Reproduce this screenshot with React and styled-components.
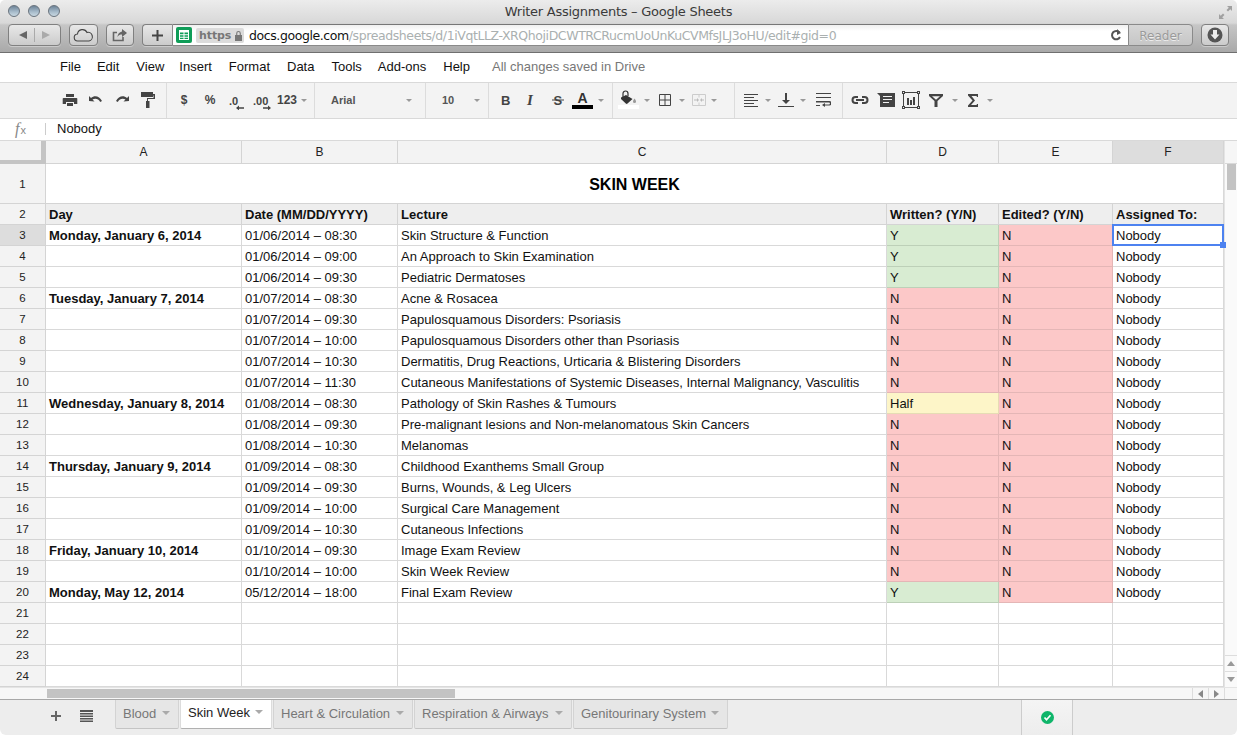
import React from "react";
import styled, { createGlobalStyle } from "styled-components";

const Global = createGlobalStyle`
  html, body { margin: 0; padding: 0; background: #fff; overflow: hidden; }
  * { box-sizing: border-box; }
`;

const Win = styled.div`
  width: 1237px; height: 735px; display: flex; flex-direction: column; overflow: hidden;
  font-family: "Liberation Sans", Arial, sans-serif; color: #000; background: #fff;
  border-radius: 5px 5px 6px 6px;
`;

/* Browser chrome */
const Chrome = styled.div`
  height: 53px; flex: none; display: flex; flex-direction: column;
  background: linear-gradient(#ececec, #d8d8d8 23px, #c6c6c6 25px, #a9a9a9 52px);
  border-bottom: 1px solid #6f6f6f;
`;
const TitleBar = styled.div`
  height: 24px; display: flex; align-items: center; justify-content: space-between; padding: 0 4px 0 8px;
  position: relative;
`;
const Lights = styled.div`display: flex; gap: 8px; margin-bottom: 2px;`;
const Light = styled.span`
  width: 12px; height: 12px; border-radius: 50%;
  background: linear-gradient(#6d8498, #a9bdcc 60%, #c9d8e2);
  border: 1px solid #69737d;
`;
const Title = styled.div`
  position: absolute; left: 0; right: 0; top: 4px; text-align: center;
  font: 13px "DejaVu Sans", sans-serif; letter-spacing: -0.26px; color: #3a3a3a;
`;
const BrowserBar = styled.div`
  height: 22px; display: flex; align-items: stretch; padding: 0 8px;
`;
const ChromeBtn = styled.div`
  width: ${p => p.$w}px; margin-right: ${p => p.$mr || 0}px;
  display: flex; align-items: center; justify-content: center; flex: none;
  border: 1px solid #808080; border-radius: 4px;
  background: linear-gradient(#e8e8e8, #cbcbcb);
  box-shadow: 0 1px 0 rgba(255,255,255,.35);
`;
const NavSplit = styled.span`width: 1px; height: 14px; background: #aaa; margin: 0 6px;`;
const UrlField = styled.div`
  flex: 1; display: flex; align-items: center; background: linear-gradient(#f0f0f0, #fff 6px);
  border-top: 1px solid #777; border-bottom: 1px solid #8a8a8a; padding-left: 3px; min-width: 0;
`;
const PlusBtn = styled(ChromeBtn)`border-radius: 4px 0 0 4px; border-right: 1px solid #8a8a8a;`;
const SheetBadge = styled.div`
  width: 16px; height: 16px; background: #0f9d58; border-radius: 2px;
  display: flex; align-items: center; justify-content: center;
`;
const Https = styled.div`
  margin-left: 4px; width: 48px; height: 15px; background: #dcdcdc; border-radius: 2px;
  display: flex; align-items: center; gap: 3px; padding-left: 3px;
  font: bold 11px "DejaVu Sans", sans-serif; color: #777; letter-spacing: -0.1px;
`;
const Url = styled.div`
  margin-left: 5px; font: 12.5px "DejaVu Sans", sans-serif; color: #aab0b0; flex: 1; white-space: nowrap;
  letter-spacing: -0.41px;
  span { color: #111; }
`;
const Reload = styled.div`width: 22px; display: flex; justify-content: center; margin-right: 1px;`;
const ReaderBtn = styled.div`
  width: 65px; margin-right: 8px; border: 1px solid #8a8a8a; border-radius: 0 4px 4px 0; flex: none;
  background: linear-gradient(#d6d6d6, #c6c6c6); padding-top: 1px;
  display: flex; align-items: center; justify-content: center;
  font: 12px "DejaVu Sans", sans-serif; color: #9a9a9a; text-shadow: 0 1px 0 #eee;
`;

/* Menu */
const Menu = styled.div`
  height: 30px; flex: none; display: flex; align-items: center; padding: 0 0 3px 60px; font-size: 13px; color: #111;
  border-bottom: 1px solid #d9d9d9; background: #fff;
`;
const MenuItem = styled.span`margin-right: ${p => p.$mr}px;`;
const Saved = styled.span`color: #777; margin-left: 22px;`;

/* Toolbar */
const Toolbar = styled.div`
  height: 36px; flex: none; display: flex; background: #f3f3f3; border-bottom: 1px solid #d9d9d9;
`;
const ToolGroup = styled.div`
  width: ${p => p.$w}px; padding-left: ${p => p.$pl || 0}px; flex: none; display: flex; align-items: center;
  border-right: 1px solid #dcdcdc; padding-bottom: 1px;
`;
const ToolLast = styled(ToolGroup)`border-right: none; flex: 1;`;
const Tool = styled.div`
  width: ${p => p.$w || 26}px; flex: none; height: 24px; display: flex; align-items: center; justify-content: center;
  font: bold 12px "Liberation Sans", sans-serif; color: #444;
`;
const Caret = styled.span`
  width: 0; height: 0; flex: none; border-left: 3.5px solid transparent; border-right: 3.5px solid transparent;
  border-top: 3.5px solid #999; margin-left: ${p => p.$ml || 0}px; margin-right: ${p => p.$mr || 0}px;
`;
const FontName = styled.span`font: bold 11px "Liberation Sans", sans-serif; color: #555; width: ${p => p.$w}px; margin-left: ${p => p.$ml}px;`;

/* Formula */
const Formula = styled.div`
  height: 22px; flex: none; display: flex; align-items: center; background: #fff; border-bottom: 1px solid #d9d9d9;
  font-size: 13px; padding-bottom: 2px;
`;
const Fx = styled.span`
  width: 46px; padding-left: 15px; font: italic 16px "Liberation Serif", serif; color: #888; position: relative; line-height: 16px;
  &::after { content: ""; position: absolute; right: 0; top: 2px; height: 12px; width: 1px; background: #ccc; }
  small { font: 11px "Liberation Sans", sans-serif; margin-left: 1px; }
`;
const FormulaText = styled.span`margin-left: 11px; color: #111;`;

/* Sheet */
const SheetArea = styled.div`flex: 1; display: flex; min-height: 0; background: #fff; overflow: hidden;`;
const Grid = styled.div`
  width: 1224px; flex: none; display: grid; align-content: start;
  grid-template-columns: 46px 196px 156px 489px 112px 114px 111px;
  grid-template-rows: 23px 40px 21px;
  grid-auto-rows: 21px;
`;
const Corner = styled.div`
  background: #f3f3f3; border-right: 5px solid #c4c4c4; border-bottom: 4px solid #c4c4c4;
`;
const ColHead = styled.div`
  display: flex; align-items: center; justify-content: center; font-size: 12px; color: #222;
  background: ${p => p.$sel ? "#dddddd" : "#f3f3f3"};
  border-right: 1px solid #d4d4d4; border-bottom: 1px solid #d4d4d4;
`;
const RowHead = styled.div`
  display: flex; align-items: center; justify-content: center; font-size: 11.5px; color: #222;
  background: ${p => p.$sel ? "#dddddd" : "#f3f3f3"};
  border-right: 1px solid #d4d4d4; border-bottom: 1px solid #d4d4d4;
`;
const fills = { Y: "#d8ecd2", N: "#fcc8c8", H: "#fdf5c8" };
const edge = { Y: "#bdd0b8", N: "#e4b6b6", H: "#e6dcb4" };
const Cell = styled.div`
  display: flex; align-items: center; padding: 0 3px; font-size: 13px; color: #111; white-space: nowrap; overflow: hidden;
  font-weight: ${p => p.$bold ? 700 : 400};
  background: ${p => fills[p.$fill] || "#fff"};
  border-right: 1px solid ${p => edge[p.$fill] || "#d9d9d9"};
  border-bottom: 1px solid ${p => edge[p.$fill] || "#d9d9d9"};
`;
const HeadCell = styled(Cell)`
  background: #eeeeee; border-color: #d4d4d4; padding-top: 1px;
`;
const TitleCell = styled.div`
  grid-column: span 6; display: flex; align-items: center; justify-content: center;
  font-size: 16px; font-weight: 700; border-bottom: 1px solid #d4d4d4; border-right: 1px solid #d9d9d9; padding-top: 2px;
`;
const Active = styled(Cell)`
  position: relative; overflow: visible; border: 2px solid #4d82f0; padding: 0 2px; z-index: 2; height: 22px; margin: -1px 0 0 -1px; width: 112px;
`;
const Handle = styled.span`
  position: absolute; right: -4px; bottom: -4px; width: 6px; height: 6px; background: #4d82f0;
`;

/* Scrollbars */
const VScroll = styled.div`
  flex: 1; display: flex; flex-direction: column; background: #fafafa; border-left: 1px solid #e4e4e4;
`;
const VTop = styled.div`height: 23px; flex: none; background: #f6f6f6; border-bottom: 1px solid #d9d9d9;`;
const VThumb = styled.div`width: 9px; height: 26px; background: #c3c3c3; margin: 0 0 0 2px; flex: none;`;
const VSpacer = styled.div`flex: 1;`;
const ArrowBtn = styled.div`
  height: 16px; display: flex; align-items: center; justify-content: center; border-top: 1px solid #ddd; flex: none;
`;
const HScroll = styled.div`
  height: 13px; flex: none; display: flex; align-items: stretch; background: #f7f7f7; border-top: 1px solid #e4e4e4;
  border-bottom: 1px solid #a8a8a8;
`;
const HLead = styled.div`width: 47px; flex: none;`;
const HThumb = styled.div`width: 408px; background: #c3c3c3; flex: none; margin: 1px 0;`;
const HFill = styled.div`flex: 1;`;
const HBtn = styled.div`
  width: 16px; flex: none; border-left: 1px solid #ddd; display: flex; align-items: center; justify-content: center;
`;
const HEnd = styled.div`width: 13px; flex: none; border-left: 1px solid #ddd;`;

/* Tabs */
const TabBar = styled.div`
  height: 35px; flex: none; display: flex; align-items: stretch; background: #ededed; position: relative;
`;
const TabTools = styled.div`
  width: 115px; flex: none; display: flex; align-items: center; padding: 0 0 3px 50px; gap: 18px;
`;
const Tab = styled.div`
  width: ${p => p.$w}px; flex: none; height: 29px; display: flex; align-items: center; padding: 0 0 ${p => p.$on ? 3 : 1}px 7px;
  font-size: 13px; color: ${p => p.$on ? "#222" : "#777"};
  background: ${p => p.$on ? "#fff" : "#e6e6e6"};
  border: 1px solid ${p => p.$on ? "#dcdcdc" : "#d3d3d3"}; border-top: 0;
  border-bottom: ${p => p.$on ? "1px solid #b0b0b0" : "1px solid #c4c4c4"};
  border-radius: 0 0 2px 2px; margin-right: 1px;
  position: relative;
`;
const TabCaret = styled.span`
  position: absolute; right: 8px; top: ${p => p.$on ? 10 : 11}px; width: 0; height: 0;
  border-left: 4px solid transparent; border-right: 4px solid transparent; border-top: 4px solid #aaa;
`;
const StatusSpacer = styled.div`width: 292px; flex: none;`;
const Status = styled.div`
  width: 52px; flex: none; display: flex; align-items: center; justify-content: center;
  border-left: 1px solid #ccc; border-right: 1px solid #ccc;
  background: linear-gradient(#f4f4f4, #ededed);
`;

const Svg = ({ w = 16, h = 16, vb, children }) => (
  <svg width={w} height={h} viewBox={vb || `0 0 ${w} ${h}`} style={{ display: "block", flex: "none" }}>{children}</svg>
);

const icons = {
  print: <Svg><path fill="#444" d="M4 2h8v3H4zM1.500 6h13a.8.8 0 0 1 .8.8V12H12v-2H4v2H.7V6.800A.8.8 0 0 1 1.500 6zM5 11h6v3H5z" /></Svg>,
  undo: <Svg><path fill="#444" d="M1 9V4l2 2c3.500-3 8.500-2 11 3l-1.800.9C10.500 6.500 7 6 4.500 7.500L6.500 9.400z" /></Svg>,
  redo: <Svg><path fill="#444" d="M15 9V4l-2 2C9.500 3 4.500 4 2 9l1.800.9C5.500 6.500 9 6 11.500 7.500L9.500 9.400z" /></Svg>,
  paint: <Svg w={16} h={18}><path fill="#444" d="M1 1h12v2h2v5H8v2h1.500v7H6v-7h1V7h6.500V4.500H13V6H1z" /></Svg>,
  dec1: <Svg w={18} h={20}><text x="2" y="15" fontFamily="Liberation Sans" fontWeight="700" fontSize="11" fill="#444">.0</text><path fill="#444" d="M9 18l3-2.400v1.700h5v1.400h-5v1.700z" /></Svg>,
  dec2: <Svg w={20} h={20}><text x="1" y="15" fontFamily="Liberation Sans" fontWeight="700" fontSize="11" fill="#444">.00</text><path fill="#444" d="M19 18l-3-2.400v1.700h-5v1.400h5v1.700z" /></Svg>,
  bold: <Svg w={12} h={14}><text x="1" y="12" fontFamily="Liberation Sans" fontWeight="700" fontSize="13" fill="#444">B</text></Svg>,
  ital: <Svg w={12} h={14}><text x="1" y="12" fontFamily="Liberation Serif" fontWeight="700" fontStyle="italic" fontSize="15" fill="#444">I</text></Svg>,
  strike: <Svg w={14} h={14}><text x="2.500" y="12" fontFamily="Liberation Sans" fontWeight="700" fontSize="13" fill="#444">S</text><path fill="#444" d="M1 6.500h12v1H1z" /></Svg>,
  color: <Svg w={22} h={20}><text x="5.500" y="13" fontFamily="Liberation Sans" fontSize="14" fill="#333">A</text><path fill="#000" d="M0 15h21v4H0z" /></Svg>,
  fill: <Svg w={22} h={20}><path fill="none" stroke="#333" strokeWidth="1.200" d="M5 7V3.500a2.500 2.500 0 0 1 5 0V6" /><path fill="#333" d="M3 7.500L8 5l6.500 4-5 4.500c-.6.500-1.200.500-1.700 0L3 9z" /><path fill="#999" d="M16.500 8.500c1 1.500 1.500 2.300 1.500 3a1.500 1.500 0 0 1-3 0c0-.7.500-1.500 1.500-3z" /><path fill="#fff" d="M0 15h21v4H0z" /></Svg>,
  borders: <Svg w={14} h={14}><path fill="none" stroke="#444" d="M1.500 1.500h11v11h-11zM7 1.500v11M1.500 7h11" /></Svg>,
  merge: <Svg w={16} h={14}><path fill="none" stroke="#ccc" d="M1.500 1.500h13v11h-13zM8 1.500v3M8 9.500v3" /><path fill="#bbb" d="M3 6.500h3V5l2 2-2 2V7.500H3zM13 6.500h-2V5L9 7l2 2V7.500h2z" /></Svg>,
  align: <Svg w={14} h={14}><path fill="#444" d="M0 1h14v1H0zM0 4h10v1H0zM0 7h14v1H0zM0 10h10v1H0zM0 13h14v1H0z" /></Svg>,
  valign: <Svg w={16} h={16}><path fill="#444" d="M0 14h16v1H0zM7 1h2v7h3l-4 4-4-4h3z" /></Svg>,
  wrap: <Svg w={15} h={16}><path fill="#444" d="M0 1h15v1H0zM0 5h15v1H0zM0 9h13.500a1.800 1.800 0 0 1 0 4.500H9V15l-3-2 3-2v1.400h4a.8.800 0 0 0 0-1.900H0zM0 13h4v1H0z" /></Svg>,
  link: <Svg w={18} h={12}><path fill="none" stroke="#444" strokeWidth="2" d="M7 3H4.500a3 3 0 0 0 0 6H7M11 3h2.500a3 3 0 0 1 0 6H11M5 6h8" /></Svg>,
  comment: <Svg w={18} h={16}><path fill="#444" d="M0 1h18v14H3V4z" /><path fill="#f3f3f3" d="M6 4h9v1H6zM6 7h9v1H6zM6 10h6v1H6z" /></Svg>,
  chart: <Svg w={18} h={18}><path fill="none" stroke="#444" d="M1.500 1.500h15v15h-15z" /><path fill="#444" d="M0 0h3v3H0zM15 0h3v3h-3zM0 15h3v3H0zM15 15h3v3h-3z" /><path fill="#f3f3f3" d="M1 1h1v1H1zM16 1h1v1h-1zM1 16h1v1H1zM16 16h1v1h-1z" /><path fill="#444" d="M5 7h2v7H5zM8 9h2v5H8zM11 6h2v8h-2z" /></Svg>,
  filter: <Svg w={14} h={14}><path fill="#444" d="M0 1h14v2L8.500 8v6h-3V8L0 3z" /><path fill="#f3f3f3" d="M3 3.200h8L7 6.700z" /></Svg>,
  sigma: <Svg w={11} h={13}><path fill="#444" d="M0 0h10v3H9L8.500 2H3.500L7 6.500 3 11h5.500L9 10h1v3H0v-1.500L4.500 6.500 0 1.500z" /></Svg>,
};

const menu = [["File", 16], ["Edit", 17], ["View", 15], ["Insert", 17], ["Format", 17], ["Data", 17], ["Tools", 16], ["Add-ons", 17], ["Help", 0]];

const rows = [
  ["Monday, January 6, 2014", "01/06/2014 – 08:30", "Skin Structure & Function", "Y"],
  ["", "01/06/2014 – 09:00", "An Approach to Skin Examination", "Y"],
  ["", "01/06/2014 – 09:30", "Pediatric Dermatoses", "Y"],
  ["Tuesday, January 7, 2014", "01/07/2014 – 08:30", "Acne & Rosacea", "N"],
  ["", "01/07/2014 – 09:30", "Papulosquamous Disorders: Psoriasis", "N"],
  ["", "01/07/2014 – 10:00", "Papulosquamous Disorders other than Psoriasis", "N"],
  ["", "01/07/2014 – 10:30", "Dermatitis, Drug Reactions, Urticaria & Blistering Disorders", "N"],
  ["", "01/07/2014 – 11:30", "Cutaneous Manifestations of Systemic Diseases, Internal Malignancy, Vasculitis", "N"],
  ["Wednesday, January 8, 2014", "01/08/2014 – 08:30", "Pathology of Skin Rashes & Tumours", "H"],
  ["", "01/08/2014 – 09:30", "Pre-malignant lesions and Non-melanomatous Skin Cancers", "N"],
  ["", "01/08/2014 – 10:30", "Melanomas", "N"],
  ["Thursday, January 9, 2014", "01/09/2014 – 08:30", "Childhood Exanthems Small Group", "N"],
  ["", "01/09/2014 – 09:30", "Burns, Wounds, & Leg Ulcers", "N"],
  ["", "01/09/2014 – 10:00", "Surgical Care Management", "N"],
  ["", "01/09/2014 – 10:30", "Cutaneous Infections", "N"],
  ["Friday, January 10, 2014", "01/10/2014 – 09:30", "Image Exam Review", "N"],
  ["", "01/10/2014 – 10:00", "Skin Week Review", "N"],
  ["Monday, May 12, 2014", "05/12/2014 – 18:00", "Final Exam Review", "Y"],
];

const tabs = [["Blood", 64], ["Skin Week", 92, true], ["Heart & Circulation", 140], ["Respiration & Airways", 158], ["Genitourinary System", 155]];

export default function App() {
  return (
    <Win>
      <Global />
      <Chrome>
        <TitleBar>
          <Lights><Light /><Light /><Light /></Lights>
          <Title>Writer Assignments – Google Sheets</Title>
          <Svg w={15} h={15}><path fill="#a0a0a0" d="M9 1h5v5l-1.700-1.700L10 6.600 8.500 5.100l2.300-2.300zM6 14H1V9l1.700 1.700L5 8.400l1.500 1.500-2.300 2.300z" /></Svg>
        </TitleBar>
        <BrowserBar>
          <ChromeBtn $w={53} $mr={8}>
            <Svg w={10} h={10}><path fill="#666" d="M9 1v8L1 5z" /></Svg>
            <NavSplit />
            <Svg w={10} h={10}><path fill="#aaa" d="M1 1v8l8-4z" /></Svg>
          </ChromeBtn>
          <ChromeBtn $w={29} $mr={8}>
            <Svg w={21} h={14}><path fill="none" stroke="#444" strokeWidth="1.100" d="M5 13a3.500 3.500 0 0 1-.5-7A5 5 0 0 1 14 4.500 4.300 4.300 0 0 1 16 13z" /></Svg>
          </ChromeBtn>
          <ChromeBtn $w={28} $mr={8}>
            <Svg w={16} h={14}><path fill="none" stroke="#666" strokeWidth="1.600" d="M11 9v3.500H1.500v-8H5" /><path fill="#666" d="M10 1l5 4-5 4V6.500c-2 0-3.500.5-4.500 2.500 0-3 2-5 4.500-5.500z" /></Svg>
          </ChromeBtn>
          <PlusBtn $w={31}>
            <Svg w={11} h={11}><path fill="#444" d="M4.500 0h2v4.500H11v2H6.500V11h-2V6.500H0v-2h4.500z" /></Svg>
          </PlusBtn>
          <UrlField>
            <SheetBadge>
              <Svg w={10} h={10}><path fill="#fff" d="M0 0h10v10H0z" /><path fill="#0f9d58" d="M1 2.500h3.500v1.800H1zM5.500 2.500H9v1.800H5.500zM1 5.300h3.500v1.500H1zM5.500 5.300H9v1.500H5.500zM1 7.800h3.500V9H1zM5.500 7.800H9V9H5.500z" /></Svg>
            </SheetBadge>
            <Https>
              https
              <Svg w={9} h={11}><path fill="#777" d="M1 5h7v6H1zM2.200 5V3.200a2.300 2.300 0 0 1 4.600 0V5H5.700V3.200a1.200 1.200 0 0 0-2.400 0V5z" /></Svg>
            </Https>
            <Url><span>docs.google.com</span>/spreadsheets/d/1iVqtLLZ-XRQhojiDCWTRCRucmUoUnKuCVMfsJLJ3oHU/edit#gid=0</Url>
            <Reload>
              <Svg w={12} h={12}><path fill="none" stroke="#555" strokeWidth="2" d="M9.500 3.500A4.200 4.200 0 1 0 10 8" /><path fill="#555" d="M7 0v6l4-2z" /></Svg>
            </Reload>
          </UrlField>
          <ReaderBtn>Reader</ReaderBtn>
          <ChromeBtn $w={28}>
            <Svg w={16} h={16}><circle cx="8" cy="8" r="7.500" fill="#555" /><path fill="#eee" d="M6 3h4v4.500h2.500L8 12.500 3.500 7.500H6z" /></Svg>
          </ChromeBtn>
        </BrowserBar>
      </Chrome>

      <Menu>
        {menu.map(([t, m]) => <MenuItem key={t} $mr={m}>{t}</MenuItem>)}
        <Saved>All changes saved in Drive</Saved>
      </Menu>

      <Toolbar>
        <ToolGroup $w={167} $pl={57}>
          <Tool>{icons.print}</Tool><Tool>{icons.undo}</Tool><Tool>{icons.redo}</Tool><Tool>{icons.paint}</Tool>
        </ToolGroup>
        <ToolGroup $w={148} $pl={4}>
          <Tool>$</Tool><Tool>%</Tool><Tool>{icons.dec1}</Tool><Tool>{icons.dec2}</Tool><Tool $w={24}>123</Tool><Caret $ml={2} />
        </ToolGroup>
        <ToolGroup $w={111}>
          <FontName $w={75} $ml={16}>Arial</FontName><Caret />
        </ToolGroup>
        <ToolGroup $w={63}>
          <FontName $w={32} $ml={16}>10</FontName><Caret />
        </ToolGroup>
        <ToolGroup $w={124} $pl={4}>
          <Tool>{icons.bold}</Tool><Tool>{icons.ital}</Tool><Tool>{icons.strike}</Tool><Tool $w={24}>{icons.color}</Tool><Caret $ml={3} />
        </ToolGroup>
        <ToolGroup $w={122} $pl={4}>
          <Tool $w={24}>{icons.fill}</Tool><Caret $ml={3} $mr={2} /><Tool $w={26}>{icons.borders}</Tool><Caret $ml={1} $mr={2} /><Tool $w={24}>{icons.merge}</Tool><Caret />
        </ToolGroup>
        <ToolGroup $w={108} $pl={3}>
          <Tool $w={26}>{icons.align}</Tool><Caret $ml={1} $mr={2} /><Tool $w={26}>{icons.valign}</Tool><Caret $ml={1} $mr={5} /><Tool $w={24}>{icons.wrap}</Tool>
        </ToolGroup>
        <ToolLast $w={200} $pl={4}>
          <Tool>{icons.link}</Tool><Tool $w={26}>{icons.comment}</Tool><Tool $w={24}>{icons.chart}</Tool><Tool $w={26}>{icons.filter}</Tool><Caret $ml={3} $mr={2} /><Tool $w={26}>{icons.sigma}</Tool><Caret $ml={1} />
        </ToolLast>
      </Toolbar>

      <Formula><Fx>f<small>x</small></Fx><FormulaText>Nobody</FormulaText></Formula>

      <SheetArea>
        <Grid>
          <Corner />
          {["A", "B", "C", "D", "E", "F"].map(c => <ColHead key={c} $sel={c === "F"}>{c}</ColHead>)}

          <RowHead>1</RowHead>
          <TitleCell>SKIN WEEK</TitleCell>

          <RowHead>2</RowHead>
          {["Day", "Date (MM/DD/YYYY)", "Lecture", "Written? (Y/N)", "Edited? (Y/N)", "Assigned To:"].map(h => <HeadCell key={h} $bold>{h}</HeadCell>)}

          {rows.map((r, i) => (
            <React.Fragment key={i}>
              <RowHead $sel={i === 0}>{i + 3}</RowHead>
              <Cell $bold>{r[0]}</Cell>
              <Cell>{r[1]}</Cell>
              <Cell>{r[2]}</Cell>
              <Cell $fill={r[3]}>{r[3] === "H" ? "Half" : r[3]}</Cell>
              <Cell $fill="N">N</Cell>
              {i === 0 ? <Active>Nobody<Handle /></Active> : <Cell>Nobody</Cell>}
            </React.Fragment>
          ))}

          {[21, 22, 23, 24, 25].map(n => (
            <React.Fragment key={n}>
              <RowHead>{n < 25 ? n : ""}</RowHead>
              <Cell /><Cell /><Cell /><Cell /><Cell /><Cell />
            </React.Fragment>
          ))}
        </Grid>
        <VScroll>
          <VTop />
          <VThumb />
          <VSpacer />
          <ArrowBtn><Svg w={8} h={5}><path fill="#999" d="M4 0l4 5H0z" /></Svg></ArrowBtn>
          <ArrowBtn><Svg w={8} h={5}><path fill="#999" d="M4 5l4-5H0z" /></Svg></ArrowBtn>
        </VScroll>
      </SheetArea>
      <HScroll>
        <HLead />
        <HThumb />
        <HFill />
        <HBtn><Svg w={5} h={8}><path fill="#888" d="M0 4l5-4v8z" /></Svg></HBtn>
        <HBtn><Svg w={5} h={8}><path fill="#888" d="M5 4L0 0v8z" /></Svg></HBtn>
        <HEnd />
      </HScroll>

      <TabBar>
        <TabTools>
          <Svg w={12} h={12}><path fill="#666" d="M5 1h2v4h4v2H7v4H5V7H1V5h4z" /></Svg>
          <Svg w={13} h={12}><path fill="#555" d="M0 0h13v2H0zM0 3h13v1.500H0zM0 5.500h13V7H0zM0 8h13v1.500H0zM0 10.500h13V12H0z" /></Svg>
        </TabTools>
        {tabs.map(([t, w, on]) => (
          <Tab key={t} $w={w} $on={on}>{t}<TabCaret $on={on} /></Tab>
        ))}
        <StatusSpacer />
        <Status>
          <Svg w={13} h={13}><circle cx="6.500" cy="6.500" r="6.500" fill="#0fb56a" /><path fill="none" stroke="#fff" strokeWidth="1.700" d="M3.500 6.500l2 2.200 4-4.500" /></Svg>
        </Status>
      </TabBar>
    </Win>
  );
}
